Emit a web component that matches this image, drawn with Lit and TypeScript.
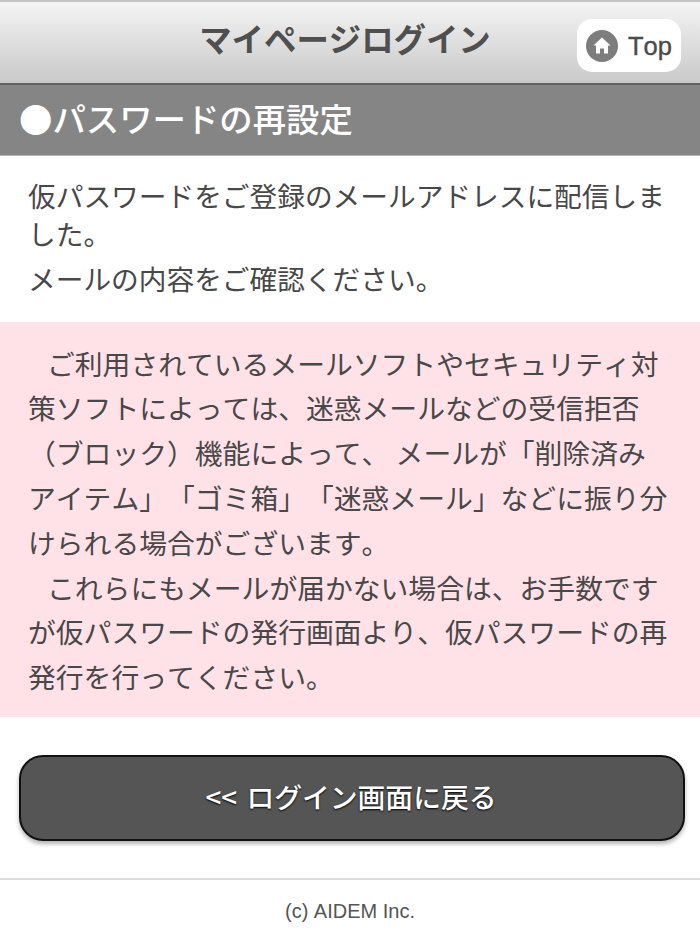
import { LitElement, html, css } from "lit";
import { customElement } from "lit/decorators.js";

@customElement("app-root")
export class AppRoot extends LitElement {
  static styles = css`
    :host {
      display: block;
      width: 700px;
      height: 950px;
      background: #fff;
      overflow: hidden;
      font-family: "Noto Sans CJK JP", "Liberation Sans", sans-serif;
      color: #484848;
      text-spacing-trim: space-all;
      font-kerning: none;
    }
    .header {
      position: relative;
      height: 81px;
      box-sizing: content-box;
      border-top: 2px solid #c4c4c4;
      border-bottom: 2px solid #626262;
      background: linear-gradient(#f4f4f4, #c9c9c9);
      display: flex;
      align-items: center;
      justify-content: center;
      padding: 0 10px 0 0;
    }
    .header h1 {
      margin: 0 0 9px;
      font-size: 32.4px;
      font-weight: 700;
      color: #4f4f4f;
      line-height: 1;
    }
    .top {
      position: absolute;
      right: 19px;
      top: 17px;
      width: 104px;
      height: 53px;
      box-sizing: border-box;
      padding: 2px 0 0 9px;
      border-radius: 15px;
      background: #fff;
      display: flex;
      align-items: center;
      gap: 10px;
      font-family: "Liberation Sans", sans-serif;
      font-size: 25.5px;
      -webkit-text-stroke: 0.4px #4a4a4a;
      color: #4a4a4a;
    }
    .top svg { width: 32px; height: 32px; flex: none; margin-top: -2px; }
    .bar {
      height: 71px;
      box-sizing: border-box;
      background: #858585;
      border-bottom: 1px solid #b5b5b5;
      color: #fff;
      display: flex;
      align-items: center;
      padding: 0 0 5px 19px;
      font-size: 33.4px;
      font-weight: 500;
    }
    .intro {
      padding: 20px 28px 0;
      height: 166px;
      box-sizing: border-box;
      font-size: 27.7px;
      line-height: 38px;
    }
    .intro p { margin: 0 0 7px; }
    .notice {
      background: #ffe2e7;
      height: 395px;
      box-sizing: border-box;
      padding: 18.6px 28px 0;
      font-size: 27.8px;
      line-height: 44.8px;
      white-space: nowrap;
    }
    .notice .indent { padding-left: 19px; }
    .btn-wrap { padding: 38px 15px 0 19px; }
    .btn {
      height: 86px;
      box-sizing: border-box;
      background: #555;
      border: 2px solid #111;
      border-radius: 24px;
      box-shadow: 0 3px 4px rgba(0,0,0,.3);
      color: #fff;
      display: flex;
      align-items: center;
      justify-content: center;
      padding: 0 2px 4px 0;
      font-size: 27.8px;
      font-weight: 500;
      word-spacing: 3px;
      text-shadow: 0 1px 2px #000;
    }
    .footer {
      margin-top: 37px;
      border-top: 2px solid #ddd;
      padding-top: 20px;
      text-align: center;
      font-family: "Liberation Sans", sans-serif;
      font-size: 20px;
      color: #555;
    }
  `;

  render() {
    return html`
      <div class="header">
        <h1>マイページログイン</h1>
        <a class="top">
          <svg viewBox="0 0 32 32">
            <circle cx="16" cy="16" r="16" fill="#7d7d7d"></circle>
            <path d="M16 7.5 L24.5 15.5 H22 V23.5 H18 V18.5 H14 V23.5 H10 V15.5 H7.5 Z" fill="#fff"></path>
          </svg>
          Top
        </a>
      </div>
      <div class="bar">●パスワードの再設定</div>
      <div class="intro">
        <p>仮パスワードをご登録のメールアドレスに配信しました。</p>
        <p>メールの内容をご確認ください。</p>
      </div>
      <div class="notice">
        <div class="indent">ご利用されているメールソフトやセキュリティ対</div>
        <div>策ソフトによっては、迷惑メールなどの受信拒否</div>
        <div>（ブロック）機能によって、 メールが「削除済み</div>
        <div>アイテム」「ゴミ箱」「迷惑メール」などに振り分</div>
        <div>けられる場合がございます。</div>
        <div class="indent">これらにもメールが届かない場合は、お手数です</div>
        <div>が仮パスワードの発行画面より、仮パスワードの再</div>
        <div>発行を行ってください。</div>
      </div>
      <div class="btn-wrap"><div class="btn">&lt;&lt; ログイン画面に戻る</div></div>
      <div class="footer">(c) AIDEM Inc.</div>
    `;
  }
}
